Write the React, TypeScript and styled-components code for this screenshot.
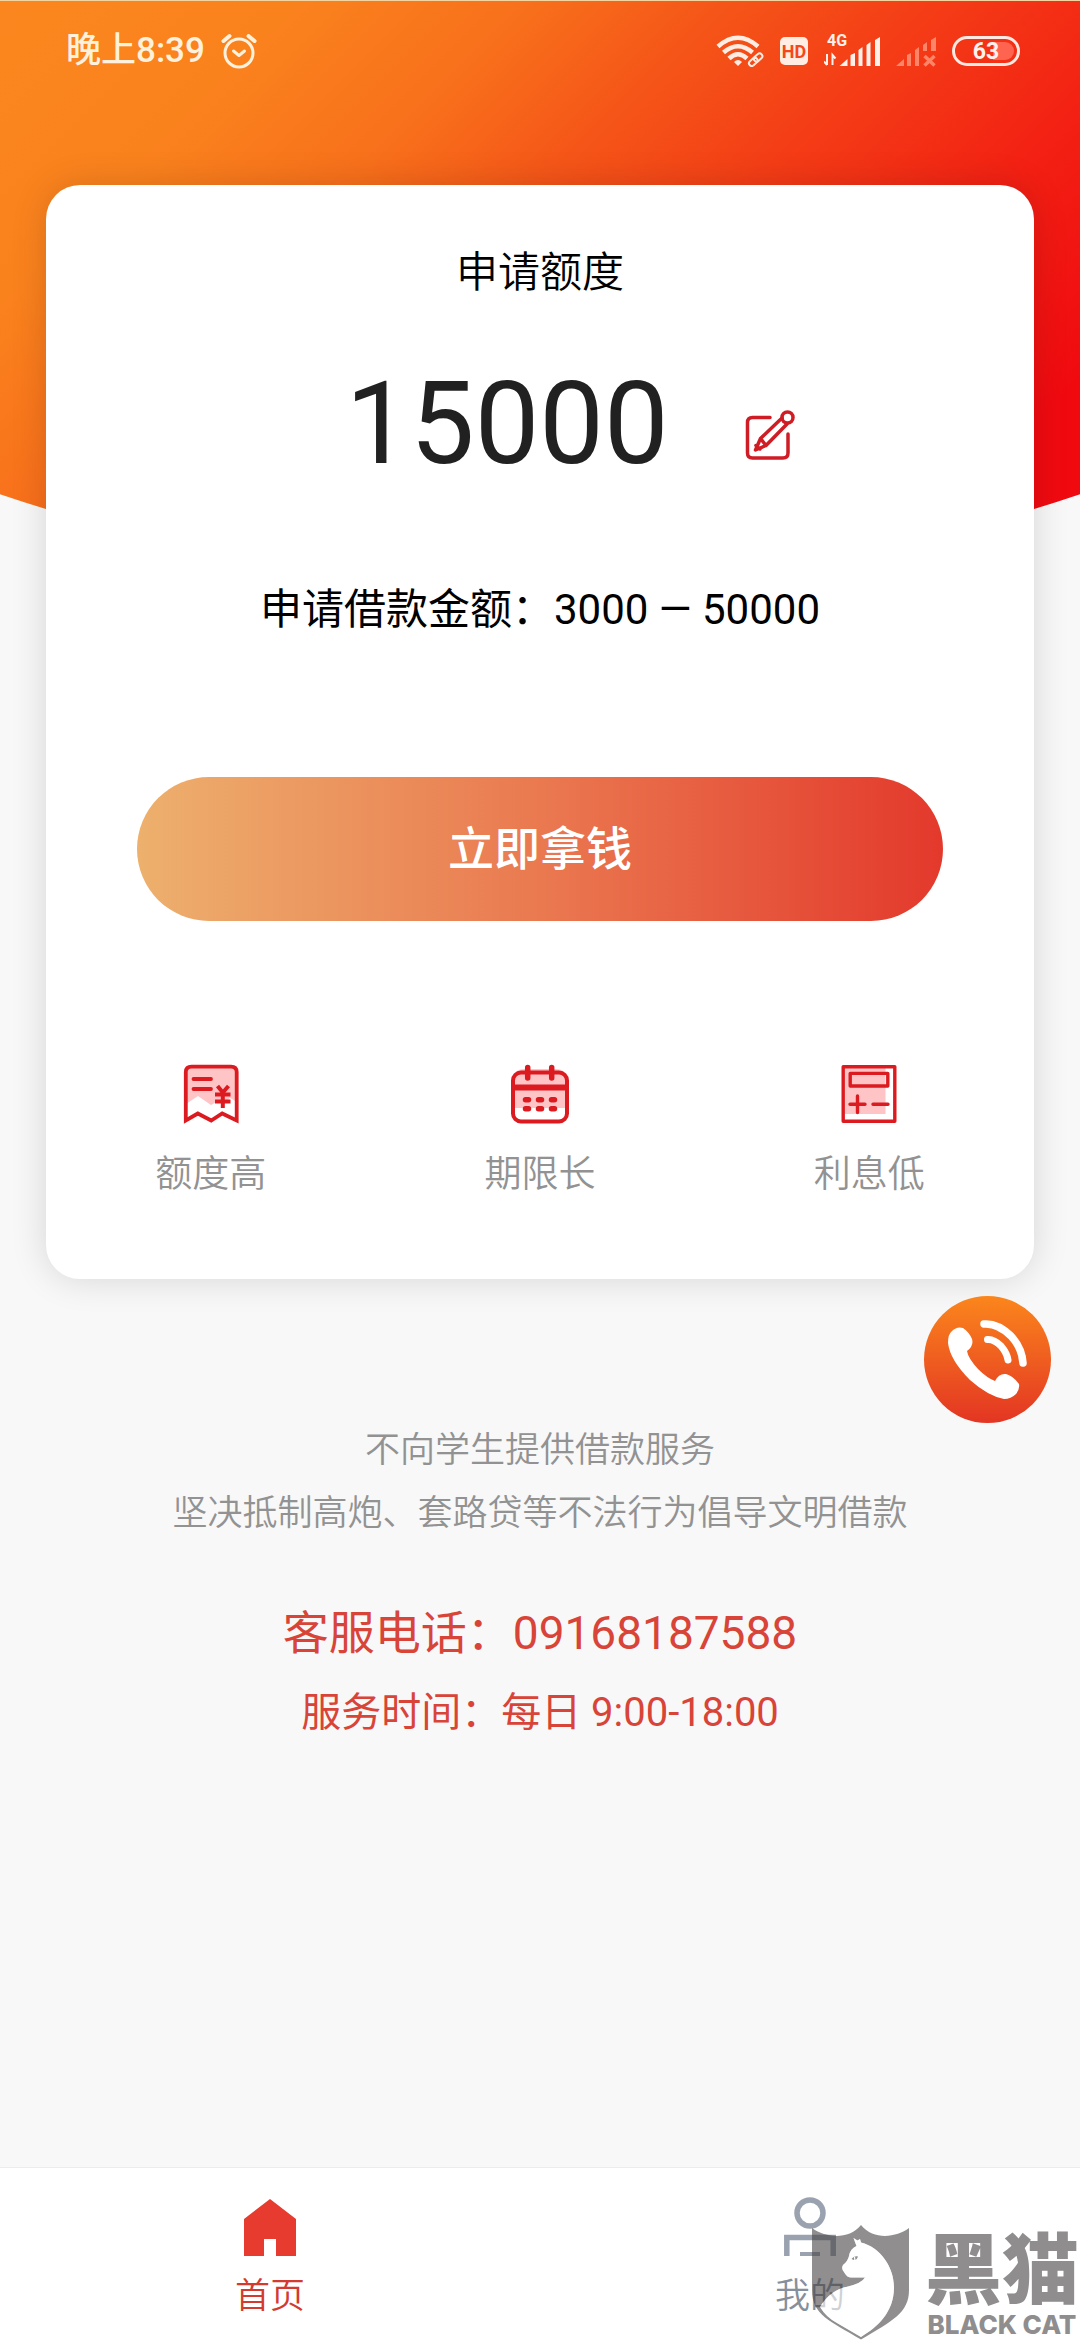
import React, { useState } from "react";
import styled, { createGlobalStyle } from "styled-components";

const GlobalStyle = createGlobalStyle`
  *, *::before, *::after { box-sizing: border-box; }
  body {
    margin: 0;
    background: #f8f8f8;
    font-family: Roboto, "Noto Sans CJK SC", sans-serif;
  }
  button, input { font: inherit; }
`;

const Page = styled.div`
  position: relative;
  display: flex;
  flex-direction: column;
  min-height: 100vh;
  overflow: hidden;
`;

const Backdrop = styled.div`
  position: absolute;
  inset: 0 0 auto;
  height: 579px;
  border-top: 1px solid #f3d3a0;
  background: linear-gradient(135deg, #fb861e 0%, #fa821d 18%, #f8701b 32%, #f55518 44%, #f43a16 58%, #f32013 72%, #f00a10 88%);
  clip-path: ellipse(96% 100% at 50% 0);
`;

const StatusBar = styled.header`
  position: relative;
  display: flex;
  align-items: center;
  justify-content: space-between;
  height: 102px;
  padding: 0 60px 0 66px;
  color: #fff1dc;
`;

const StatusGroup = styled.div`
  display: flex;
  align-items: center;
  gap: 16px;
`;

const Clock = styled.span`
  font-size: 35px;
  line-height: 44px;
  font-weight: 500;
`;

const HdBadge = styled.span`
  display: flex;
  align-items: center;
  justify-content: center;
  width: 28px;
  height: 28px;
  border-radius: 5px;
  background: #ffece2;
  color: #f4481a;
  font-size: 18px;
  font-weight: 700;
`;

const Battery = styled.span`
  display: flex;
  align-items: center;
  justify-content: center;
  width: 68px;
  height: 30px;
  padding: 3px;
  border: 3px solid #ffe9e2;
  border-radius: 15px;
  background: linear-gradient(90deg, transparent 62%, #ff6450 62%) content-box;
  color: #fff1ec;
  font-size: 23px;
  font-weight: 700;
`;

const Card = styled.main`
  position: relative;
  display: flex;
  flex-direction: column;
  align-items: stretch;
  margin: 83px 46px 0;
  padding: 66px 0 82px;
  border-radius: 34px;
  background: #fff;
  box-shadow: 0 0 36px rgba(0, 0, 0, 0.14);
`;

const Title = styled.label`
  font-size: 42px;
  line-height: 44px;
  font-weight: 350;
  text-align: center;
  color: #000;
`;

const AmountRow = styled.div`
  display: flex;
  align-items: flex-end;
  align-self: center;
  gap: 16px;
  width: 510px;
  margin-top: 61px;
`;

const AmountInput = styled.input`
  flex: 1;
  min-width: 0;
  height: 136px;
  padding: 0;
  border: 0;
  outline: 0;
  background: transparent;
  font-size: 115px;
  line-height: 136px;
  text-align: center;
  color: #212121;
`;

const IconButton = styled.button`
  display: flex;
  margin: 0 0 32px;
  padding: 0;
  border: 0;
  background: transparent;
`;

const RangeText = styled.p`
  margin: 96px 0 0;
  font-size: 42px;
  line-height: 44px;
  text-align: center;
  color: #000;
`;

const SubmitButton = styled.button`
  height: 144px;
  margin: 145px 91px 0;
  padding: 0;
  border: 0;
  border-radius: 72px;
  background: linear-gradient(90deg, #edb06d, #ea7950 50%, #e3392c);
  color: #fff;
  font-size: 46px;
  line-height: 60px;
  font-weight: 500;
`;

const Features = styled.ul`
  display: grid;
  grid-template-columns: repeat(3, 1fr);
  margin: 143px 0 0;
  padding: 0;
  list-style: none;
`;

const Feature = styled.li`
  display: flex;
  flex-direction: column;
  align-items: center;
  gap: 29px;
  font-size: 37px;
  line-height: 44px;
  font-weight: 350;
  color: #929292;
`;

const Notice = styled.p`
  margin: 140px 0 0;
  font-size: 35px;
  line-height: 63px;
  font-weight: 350;
  text-align: center;
  color: #929292;
`;

const Contact = styled.section`
  display: flex;
  flex-direction: column;
  align-items: center;
  gap: 20px;
  margin: 58px 0 60px;
  line-height: 60px;
  color: #d84438;
`;

const PhoneLink = styled.a`
  font-size: 46px;
  color: inherit;
  text-decoration: none;
`;

const Hours = styled.span`
  font-size: 40px;
`;

const CallButton = styled.button`
  position: absolute;
  top: 1296px;
  right: 29px;
  display: flex;
  width: 127px;
  height: 127px;
  padding: 0;
  border: 0;
  border-radius: 50%;
  background: linear-gradient(180deg, #fb861c, #e33523);
`;

const TabBar = styled.nav`
  display: grid;
  grid-template-columns: repeat(2, 1fr);
  height: 173px;
  margin-top: auto;
  padding-top: 28px;
  border-top: 1px solid #ececec;
  background: #fff;
`;

const Tab = styled.a<{ $active?: boolean }>`
  display: flex;
  flex-direction: column;
  align-items: center;
  gap: 19px;
  font-size: 35px;
  line-height: 44px;
  font-weight: 350;
  color: ${(p) => (p.$active ? "#d33a30" : "#85909c")};
  text-decoration: none;
`;

const Watermark = styled.div`
  position: absolute;
  right: 1px;
  bottom: 0;
  display: flex;
  align-items: flex-end;
  gap: 16px;
  color: #8f8d8e;
  pointer-events: none;
`;

const WatermarkText = styled.div`
  display: flex;
  flex-direction: column;
  align-items: center;
  width: 154px;
`;

const WatermarkName = styled.span`
  font-size: 77px;
  line-height: 76px;
  font-weight: 900;
`;

const WatermarkLatin = styled.span`
  font-family: Inter, sans-serif;
  font-size: 26px;
  line-height: 30px;
  font-weight: 800;
  white-space: nowrap;
`;

const RED = "#dc1b20";
const PINK = "#ffc4c6";

const AlarmIcon = () => (
  <svg width="36" height="36" viewBox="0 0 36 36" fill="none" stroke="#fff1dc" strokeLinecap="round">
    <circle cx="18" cy="20" r="14" strokeWidth="3" />
    <path d="M12.5 18l5.5 4.500 5.500-4.500" strokeWidth="3" strokeLinejoin="round" />
    <path d="M2.500 8l6-5M33.500 8l-6-5" strokeWidth="4" />
  </svg>
);

const WifiIcon = () => (
  <svg width="48" height="32" viewBox="0 0 48 32" fill="none" stroke="#ffece2">
    <path d="M2 11.500Q22 -6 42 11.500" strokeWidth="4.500" />
    <path d="M7.500 17.500Q22 5 36.500 17.500" strokeWidth="4.500" />
    <path d="M13 23.500Q22 15 31 23.500" strokeWidth="4.500" />
    <path d="M18 27q4-4 8 0l-4 4z" fill="#ffece2" stroke="none" />
    <g strokeWidth="2" transform="rotate(-42 39.500 24.500)">
      <rect x="31.500" y="22" width="9.500" height="5.500" rx="2.750" />
      <rect x="38" y="22" width="9.500" height="5.500" rx="2.750" />
    </g>
  </svg>
);

const SignalIcon = () => (
  <svg width="56" height="44" viewBox="0 -6 56 44" fill="#fff0ea">
    <text x="3" y="11" fontSize="16" fontWeight="700" fontFamily="Roboto, sans-serif">4G</text>
    <path d="M3 19v11M3 30l-3-3.500M8.500 30V20l3 3.500" fill="none" stroke="#fff0ea" strokeWidth="2" />
    <path d="M15.500 31l8-7v7zM26.500 20l4.500-2v13h-4.500zM34.500 15l4-3v19h-4zM42.500 10l4-3v24h-4zM51 5l5-3v29h-5z" />
  </svg>
);

const NoSignalIcon = () => (
  <svg width="40" height="32" viewBox="0 0 40 32" fill="#ff8568">
    <path d="M0 31l8-7v7zM11 20l4-2v13h-4zM19 15l4-3v19h-4zM27 10l4-3v9h-4zM35 5l5-3v14h-5z" />
    <path d="M28.500 21l10 9.500M38.500 21l-10 9.500" stroke="#ff8568" strokeWidth="3.500" />
  </svg>
);

const EditIcon = () => (
  <svg width="50" height="50" viewBox="0 0 50 50" fill="none" stroke="#d01c24" strokeWidth="3.500" strokeLinecap="round" strokeLinejoin="round">
    <path d="M25 7.500H7.500Q2.500 7.500 2.500 12.500V43Q2.500 48 7.500 48H38Q43 48 43 43V24" />
    <circle cx="42.500" cy="7.500" r="5.500" />
    <path d="M37 8L15.500 28.500L10.500 40L21 35.500L42 14M15.500 28.500L21 35.500M11 35.500l4 3.500" />
  </svg>
);

const QuotaIcon = () => (
  <svg width="60" height="60" viewBox="0 0 60 60" fill="none" stroke={RED} strokeWidth="3.800">
    <path d="M5 3H56V38L49 34L42 40L37 37L30 41L17 32L5 40Z" fill={PINK} stroke="none" />
    <path d="M4.800 56.500V8Q4.800 2.600 10.500 2.600H50Q55.700 2.600 55.700 8V56.500L41.200 49.500L30.200 56.500L16.800 49.500Z" />
    <path d="M12.500 15H30M12.500 25H30" strokeLinecap="round" />
    <path d="M36.500 22L41.800 28.500L47.500 22M41.800 28V44M34 30.500H49.500M34 37.500H49.500" strokeWidth="4" />
  </svg>
);

const TermIcon = () => (
  <svg width="60" height="60" viewBox="0 0 60 60" fill="none" stroke={RED} strokeWidth="4">
    <path d="M4 13Q5 5 14 5H46Q55 5 56 13V44H4Z" fill={PINK} stroke="none" />
    <rect x="3" y="8.500" width="54" height="49" rx="8" />
    <path d="M3 23.500H57" strokeWidth="6" />
    <path d="M17.700 3.500V14M41.700 3.500V14" strokeWidth="5.500" strokeLinecap="round" />
    <path d="M15.500 35.700h3M28.500 35.700h3M41.500 35.700h3M15.500 44.700h3M28.500 44.700h3M41.500 44.700h3" strokeWidth="5.500" strokeLinecap="round" />
  </svg>
);

const RateIcon = () => (
  <svg width="60" height="60" viewBox="0 0 60 60" fill="none" stroke={RED} strokeWidth="3.400" strokeLinejoin="round">
    <path d="M6 4H46.500V50H6Z" fill={PINK} stroke="none" />
    <rect x="4.200" y="2.700" width="51.600" height="54.600" />
    <rect x="11.200" y="9.400" width="37.600" height="12.600" />
    <path d="M11 40.300H26M18.500 32V48.500M34 40.300H49" strokeLinecap="round" />
  </svg>
);

const CallIcon = () => (
  <svg width="127" height="127" viewBox="0 0 127 127" fill="none" stroke="#fff" strokeLinecap="round">
    <path
      d="M24 47Q24 38 28 35Q33 30 39 32Q45 36 48 43Q50 50 43 55Q44 62 54 73Q63 82 71 85Q75 77 82 78Q89 80 95 88Q96 93 92 98Q87 103 80 103Q64 100 46 84Q26 64 24 47Z"
      fill="#fff"
      stroke="none"
    />
    <path d="M60 28Q74 27 87 40Q98 52 99 67" strokeWidth="7.500" />
    <path d="M63.500 43.500Q70 43 77 50Q83 57 84 64" strokeWidth="7" />
  </svg>
);

const HomeIcon = () => (
  <svg width="60" height="60" viewBox="0 0 60 60" fill="#e63b2e">
    <path d="M30 3L56 23V60H36V43H24V60H4V23Z" />
  </svg>
);

const MineIcon = () => (
  <svg width="60" height="60" viewBox="0 0 60 60" fill="none" stroke="#9aa2b0">
    <circle cx="30" cy="17" r="13" strokeWidth="5.500" />
    <path d="M6.800 61V41.500H53.200V61" strokeWidth="5.500" />
    <path d="M20 58.500H40" strokeWidth="5" />
  </svg>
);

const CatShield = () => (
  <svg width="97" height="115" viewBox="0 0 97 115">
    <path
      fill="rgba(70,66,68,0.6)"
      fillRule="evenodd"
      d="M0 3C12 12 36 16 49 0C62 16 85 12 97 3V65C97 88 80 96 49 114.500C18 96 0 90 0 65ZM49 112C65 102 82 88 82 62C82 42 68 22 49 17.500L48 14L45.500 15.500L41.500 13L44.500 21Q38 24 37 31Q36 36 31 40Q29 44 32 47Q35 53 40 52.500L53 52.500Q50 58 36 61.500Q18 65 8 82Q14 92 25 98Z"
    />
    <path
      fill="rgba(255,255,255,0.6)"
      d="M49 112C65 102 82 88 82 62C82 42 68 22 49 17.500L48 14L45.500 15.500L41.500 13L44.500 21Q38 24 37 31Q36 36 31 40Q29 44 32 47Q35 53 40 52.500L53 52.500Q50 58 36 61.500Q18 65 8 82Q14 92 25 98Z"
    />
    <path d="M39.500 34Q42 30.500 46 31.500Q44 37 39.500 34Z" fill="#8f8d8e" />
    <path d="M42.500 32L43 36" stroke="#fff" strokeWidth="1.200" />
  </svg>
);

const features = [
  { label: "额度高", Icon: QuotaIcon },
  { label: "期限长", Icon: TermIcon },
  { label: "利息低", Icon: RateIcon },
];

export default function App() {
  const [amount, setAmount] = useState("15000");

  return (
    <Page lang="zh-CN">
      <GlobalStyle />
      <Backdrop />
      <StatusBar>
        <StatusGroup>
          <Clock>晚上8:39</Clock>
          <AlarmIcon />
        </StatusGroup>
        <StatusGroup>
          <WifiIcon />
          <HdBadge>HD</HdBadge>
          <SignalIcon />
          <NoSignalIcon />
          <Battery>63</Battery>
        </StatusGroup>
      </StatusBar>

      <Card>
        <Title htmlFor="amount">申请额度</Title>
        <AmountRow>
          <AmountInput
            id="amount"
            inputMode="numeric"
            value={amount}
            onChange={(e) => setAmount(e.target.value)}
          />
          <IconButton type="button" aria-label="修改额度">
            <EditIcon />
          </IconButton>
        </AmountRow>
        <RangeText>申请借款金额：3000 — 50000</RangeText>
        <SubmitButton type="button">立即拿钱</SubmitButton>
        <Features>
          {features.map(({ label, Icon }) => (
            <Feature key={label}>
              <Icon />
              {label}
            </Feature>
          ))}
        </Features>
      </Card>

      <Notice>
        不向学生提供借款服务
        <br />
        坚决抵制高炮、套路贷等不法行为倡导文明借款
      </Notice>
      <Contact>
        <PhoneLink href="tel:09168187588">客服电话：09168187588</PhoneLink>
        <Hours>服务时间：每日 9:00-18:00</Hours>
      </Contact>

      <CallButton type="button" aria-label="拨打客服电话">
        <CallIcon />
      </CallButton>

      <TabBar>
        <Tab href="#home" $active>
          <HomeIcon />
          首页
        </Tab>
        <Tab href="#mine">
          <MineIcon />
          我的
        </Tab>
      </TabBar>

      <Watermark>
        <CatShield />
        <WatermarkText>
          <WatermarkName>黑猫</WatermarkName>
          <WatermarkLatin>BLACK CAT</WatermarkLatin>
        </WatermarkText>
      </Watermark>
    </Page>
  );
}
